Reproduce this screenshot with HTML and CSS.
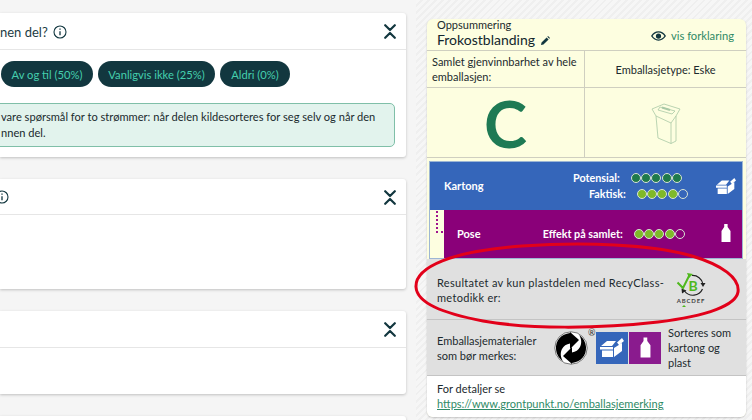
FILE: index.html
```html
<!DOCTYPE html>
<html lang="no">
<head>
<meta charset="utf-8">
<title>Oppsummering</title>
<link rel="stylesheet" href="styles.css">
</head>
<body>
<svg class="defs" width="0" height="0" aria-hidden="true">
  <symbol id="chev" viewBox="0 0 12 15"><path d="M1.200 1.200 6 6l4.800-4.800M1.200 13.800 6 9l4.800 4.800" fill="none" stroke="#12373f" stroke-width="2.200" stroke-linecap="round" stroke-linejoin="round"/></symbol>
  <symbol id="info" viewBox="0 0 14 14"><circle cx="7" cy="7" r="6" fill="none" stroke="#12373f" stroke-width="1.100"/><path d="M7 6.200v4M7 3.500v1.200" stroke="#12373f" stroke-width="1.300"/></symbol>
  <symbol id="boxes" viewBox="0 0 24 19"><path fill="#fff" d="M1 8 7 3h9l-4 5zM0 9h13v2.500H0zM2 12.500h11V19H2zM14 10l8-5v8l-8 6zM17 4.500 22 0l2 3-5 4z"/></symbol>
  <symbol id="bottle" viewBox="0 0 10 18"><path fill="#fff" d="M3.200 0h3.400v3l2.900 4v11H.500V7l2.700-4z"/></symbol>
</svg>
<main class="page">
  <section class="left">
    <article class="card card-one">
      <header class="card-head">
        <h2 class="q">nen del?</h2>
        <svg class="info"><use href="#info"/></svg>
        <svg class="chev"><use href="#chev"/></svg>
      </header>
      <div class="card-body">
        <div class="pills">
          <span class="pill pill-a">Av og til (50%)</span>
          <span class="pill pill-b">Vanligvis ikke (25%)</span>
          <span class="pill pill-c">Aldri (0%)</span>
        </div>
        <p class="alert">vare spørsmål for to strømmer: når delen kildesorteres for seg selv og når den<br>nnen del.</p>
      </div>
    </article>
    <article class="card card-two">
      <header class="card-head head-two">
        <svg class="info info-cut"><use href="#info"/></svg>
        <svg class="chev"><use href="#chev"/></svg>
      </header>
    </article>
    <article class="card card-three">
      <header class="card-head head-three">
        <svg class="chev"><use href="#chev"/></svg>
      </header>
    </article>
    <article class="card card-four"></article>
  </section>

  <aside class="right">
    <div class="summary">
      <header class="sum-head">
        <div>
          <div class="sum-label">Oppsummering</div>
          <div class="sum-title">Frokostblanding
            <svg class="pencil" viewBox="0 0 12 12"><path fill="#12373f" d="M0 12l.700-3.300L7.500 1.900l2.600 2.600L3.300 11.300zM8.400 1l1-1L12 2.600l-1 1z"/></svg>
          </div>
        </div>
        <div class="explain">
          <svg class="eye" viewBox="0 0 16 10"><path fill="#12373f" fill-rule="evenodd" d="M8 0c3.500 0 6.300 2.200 8 5-1.700 2.800-4.500 5-8 5S1.700 7.800 0 5c1.700-2.800 4.500-5 8-5zm0 1.300C5.500 1.300 3.300 2.800 1.700 5c1.600 2.200 3.800 3.700 6.300 3.700s4.700-1.500 6.300-3.700C12.700 2.800 10.500 1.300 8 1.300zM8 2.200a2.800 2.800 0 1 1 0 5.600 2.800 2.800 0 0 1 0-5.600z"/></svg>
          <span>vis forklaring</span>
        </div>
      </header>
      <div class="sum-grid">
        <div class="cell cell-text">Samlet gjenvinnbarhet av hele emballasjen:</div>
        <div class="cell cell-center">Emballasjetype: Eske</div>
        <div class="cell cell-grade"><span class="grade">C</span></div>
        <div class="cell cell-pack">
          <svg class="pack" viewBox="0 0 30 44" fill="none" stroke="#a9c9a6" stroke-width=".8">
            <path d="M5 15 7 37l13 5.500 5-2.500V15"/>
            <path d="M5 15l15 7 5-7M20 22v20.500"/>
            <path d="M1 8 13 3l16 5-4 7M1 8l4 7M9 6l15 4-3 3-14-4z"/>
            <path d="M11 6.500l8 2.500" stroke-width="2"/>
          </svg>
        </div>
      </div>
      <div class="materials">
        <div class="mat mat-blue">
          <span class="mat-name">Kartong</span>
          <div class="scores">
            <div class="score score-pot">Potensial:<span class="dots"><i class="dot dark"></i><i class="dot dark"></i><i class="dot dark"></i><i class="dot dark"></i><i class="dot dark"></i></span></div>
            <div class="score score-act">Faktisk:<span class="dots"><i class="dot lime"></i><i class="dot lime"></i><i class="dot lime"></i><i class="dot lime"></i><i class="dot"></i></span></div>
          </div>
          <svg class="mat-boxes"><use href="#boxes"/></svg>
        </div>
        <div class="sub">
          <div class="link-col"><span class="dotted"></span></div>
          <div class="mat mat-purple">
            <span class="mat-name">Pose</span>
            <div class="score score-eff">Effekt på samlet:<span class="dots"><i class="dot lime"></i><i class="dot lime"></i><i class="dot lime"></i><i class="dot lime"></i><i class="dot"></i></span></div>
            <svg class="mat-bottle"><use href="#bottle"/></svg>
          </div>
        </div>
      </div>
      <div class="gray recy">
        <p class="recy-text">Resultatet av kun plastdelen med RecyClass-metodikk er:</p>
        <div class="recy-logo">
          <svg class="recy-svg" viewBox="0 0 30 25">
            <path d="M16 3.500A10.500 10.500 0 0 1 27 12" fill="none" stroke="#222" stroke-width="1.200"/>
            <path d="M26.500 17a10.500 10.500 0 0 1-18 2" fill="none" stroke="#222" stroke-width="1.200"/>
            <path d="M24.500 11h5l-2.500 4zM6 21.500 5.500 16.500l5 2z" fill="#222"/>
            <path d="M1.500 10.500 7 16 13.500 3" fill="none" stroke="#4fb81e" stroke-width="2"/>
            <path d="M11 1l6 1-4 4z" fill="#4fb81e"/>
            <text x="17" y="19" class="recy-b">B</text>
          </svg>
          <div class="recy-scale">ABCDEF</div>
          <span class="recy-mark"></span>
        </div>
      </div>
      <div class="gray marks">
        <p class="marks-label">Emballasjematerialer som bør merkes:</p>
        <svg class="gdot" viewBox="0 0 34 34">
          <circle cx="17" cy="17" r="16.200" fill="#fff" stroke="#222" stroke-width=".6"/>
          <path fill="#000" d="M16 2C7 3 1.500 9.500 2 18c.300 5 3 9.500 7 12 -2.500-3.500-3-8-1-12 1.500-3 4.500-5 8-5.500V18l9-9-9-8z"/>
          <path fill="#000" d="M18 32c9-1 14.500-7.500 14-16-.300-5-3-9.500-7-12 2.500 3.500 3 8 1 12-1.500 3-4.500 5-8 5.500V16l-9 9 9 8z"/>
        </svg>
        <span class="reg">®</span>
        <span class="tile tile-blue"><svg class="tile-boxes"><use href="#boxes"/></svg></span>
        <span class="tile tile-purple"><svg class="tile-bottle"><use href="#bottle"/></svg></span>
        <p class="marks-note">Sorteres som kartong og plast</p>
      </div>
      <footer class="details">
        <div>For detaljer se</div>
        <a class="details-link" href="#">https://www.grontpunkt.no/emballasjemerking</a>
      </footer>
    </div>
    <svg class="ring" viewBox="0 0 332 90" fill="none"><path d="M4 46C3 26 40 10 110 5c60-4 130-2 170 10 30 9 48 22 46 36-2 13-30 24-80 30-60 7-130 7-175-1C30 72 5 62 4 46z" stroke="#e2001a" stroke-width="3"/></svg>
  </aside>
</main>
</body>
</html>
```
FILE: styles.css
```css
* { box-sizing: border-box; }
html, body { margin: 0; padding: 0; }
body {
  width: 752px;
  height: 420px;
  overflow: hidden;
  background: #f5f5f5;
  font-family: "Lato", "Liberation Sans", sans-serif;
  color: #1c2a2e;
}
h2, p { margin: 0; font-weight: 400; }
.defs { position: absolute; }
.page { display: flex; height: 420px; }

/* left column */
.left {
  width: 416px;
  padding: 13px 10px 0 0;
  display: flex;
  flex-direction: column;
  gap: 22px;
  overflow: hidden;
  flex: none;
}
.card {
  flex: none;
  background: #fff;
  border-radius: 0 3px 3px 0;
  box-shadow: 0 1px 3px rgba(0, 0, 0, .22);
  overflow: hidden;
}
.card-one { height: 144px; }
.card-two { height: 110px; }
.card-three { height: 83px; }
.card-four { height: 40px; }
.card-head {
  height: 37px;
  border-bottom: 1px solid #e6e6e6;
  display: flex;
  align-items: center;
  padding: 1px 10px 0 0;
}
.head-two { height: 36px; }
.head-three { height: 37px; }
.q { font-size: 13px; color: #1d3c44; }
.info { width: 14px; height: 14px; margin-left: 5px; }
.info-cut { margin-left: -5px; }
.chev { width: 12px; height: 15px; margin-left: auto; }
.card-body { padding: 11px 11px 0 0; }
.pills { display: flex; gap: 5px; padding-left: 1px; }
.pill {
  height: 26px;
  display: flex;
  align-items: center;
  justify-content: center;
  border-radius: 13px;
  background: #12373f;
  color: #45cfae;
  font-size: 11.200px;
}
.pill-a { width: 92px; }
.pill-b { width: 117px; }
.pill-c { width: 70px; }
.alert {
  margin-top: 16px;
  margin-left: -6px;
  height: 44px;
  padding: 5px 8px 0 6px;
  border: 1px solid #7fbfa8;
  border-radius: 5px;
  background: #e2f3ed;
  font-size: 11.100px;
  line-height: 16px;
  color: #1a2a2e;
  overflow: hidden;
  white-space: nowrap;
}

/* right column */
.right {
  position: relative;
  flex: 1;
  padding: 19px 6px 0 11px;
  background: repeating-linear-gradient(135deg, #f6f6f6 0 3px, #efefef 3px 5px);
}
.summary {
  height: 398px;
  border-radius: 6px;
  overflow: hidden;
  background: #fdfee0;
  box-shadow: 0 1px 2px rgba(0, 0, 0, .2);
  font-size: 11px;
  line-height: 15px;
}
.sum-head {
  height: 32px;
  display: flex;
  justify-content: space-between;
  padding: 0 12px 0 10px;
  border-bottom: 1px solid #cfcfc0;
}
.sum-label { font-size: 11px; line-height: 12px; }
.sum-title { font-size: 14px; line-height: 19px; color: #12262c; margin-top: -1px; }
.pencil { width: 9px; height: 9px; margin-left: 2px; }
.explain {
  display: flex;
  align-items: center;
  gap: 5px;
  color: #2f8a66;
  font-size: 11.200px;
  padding-top: 2px;
}
.eye { width: 15px; height: 10px; }
.sum-grid {
  display: grid;
  grid-template-columns: 158px 1fr;
  grid-template-rows: 37px 70px;
}
.cell {
  border-bottom: 1px solid #cfcfc0;
  border-right: 1px solid #cfcfc0;
  display: flex;
  align-items: center;
}
.cell:nth-child(2n) { border-right: 0; }
.cell-text { padding: 0 2px 0 5px; }
.cell-center, .cell-grade, .cell-pack { justify-content: center; }
.grade {
  font-size: 65px;
  font-weight: 700;
  line-height: 62px;
  color: #1e7a54;
}
.pack { width: 30px; height: 44px; }

.materials {
  margin: 3px 3px 0 2px;
  border: 1px solid #9db6d4;
  color: #fff;
  font-weight: 700;
}
.mat { display: flex; align-items: center; position: relative; }
.mat-blue { height: 48px; background: #3566ba; padding-left: 14px; }
.mat-name { font-size: 11px; margin-top: -2px; }
.scores { margin-left: auto; margin-right: 54px; display: flex; flex-direction: column; align-items: flex-end; }
.score { display: flex; align-items: center; font-size: 10.800px; line-height: 16px; white-space: nowrap; }
.score-pot { margin-right: 6px; }
.score-eff { margin-left: auto; margin-right: 57px; margin-top: -1px; }
.dots { display: flex; gap: .300px; margin-left: 11px; }
.dot {
  width: 10px;
  height: 10px;
  border-radius: 50%;
  border: 1px solid #d8e4d4;
}
.dark { background: #1f7a4a; }
.lime { background: #7fb92a; }
.mat-boxes { position: absolute; right: 6px; top: 16px; width: 20px; height: 16px; }
.sub { display: flex; height: 48px; background: #fdfee0; }
.link-col { width: 14px; flex: none; padding: 1px 0 0 6px; }
.dotted {
  display: block;
  width: 7px;
  height: 22px;
  border-left: 2px dotted #a0148e;
  border-bottom: 2px dotted #a0148e;
}
.mat-purple { flex: 1; background: #8a0079; padding-left: 13px; }
.mat-bottle { position: absolute; right: 11px; top: 14px; width: 10px; height: 18px; }

.gray { background: #e0e0e0; }
.recy {
  height: 61px;
  display: flex;
  align-items: center;
  padding: 1px 40px 0 10px;
  border-bottom: 1px solid #c4c4c4;
}
.recy-text { width: 230px; letter-spacing: .3px; }
.recy-logo { margin-left: auto; width: 30px; display: flex; flex-direction: column; align-items: center; }
.recy-svg { width: 30px; height: 25px; }
.recy-b { font: 700 14px "Lato", sans-serif; fill: #4fb81e; text-anchor: middle; }
.recy-scale { font-size: 6px; line-height: 7px; letter-spacing: .8px; color: #444; font-weight: 700; }
.recy-mark { width: 0; height: 0; border: 2px solid transparent; border-bottom-color: #4fb81e; border-top: 0; margin: 1px 15px 0 0; }

.marks {
  height: 56px;
  display: flex;
  align-items: center;
  padding-left: 10px;
  border-bottom: 1px solid #c4c4c4;
}
.marks-label { width: 117px; flex: none; }
.gdot { width: 34px; height: 34px; flex: none; }
.reg { width: 8px; flex: none; align-self: flex-start; font-size: 9px; line-height: 10px; margin-top: 8px; color: #333; }
.tile { width: 32px; height: 32px; flex: none; display: flex; align-items: center; justify-content: center; margin-right: 1px; }
.tile-blue { background: #3566ba; }
.tile-purple { background: #8a1b8e; }
.tile-boxes { width: 24px; height: 19px; }
.tile-bottle { width: 11px; height: 21px; }
.marks-note { margin-left: 6px; width: 74px; }

.details { height: 41px; background: #fff; padding: 5px 10px 0; }
.details-link { color: #2f8a66; text-decoration: underline; font-size: 11.050px; }

.ring {
  position: absolute;
  left: -4px;
  top: 241px;
  width: 332px;
  height: 90px;
  pointer-events: none;
}
```
